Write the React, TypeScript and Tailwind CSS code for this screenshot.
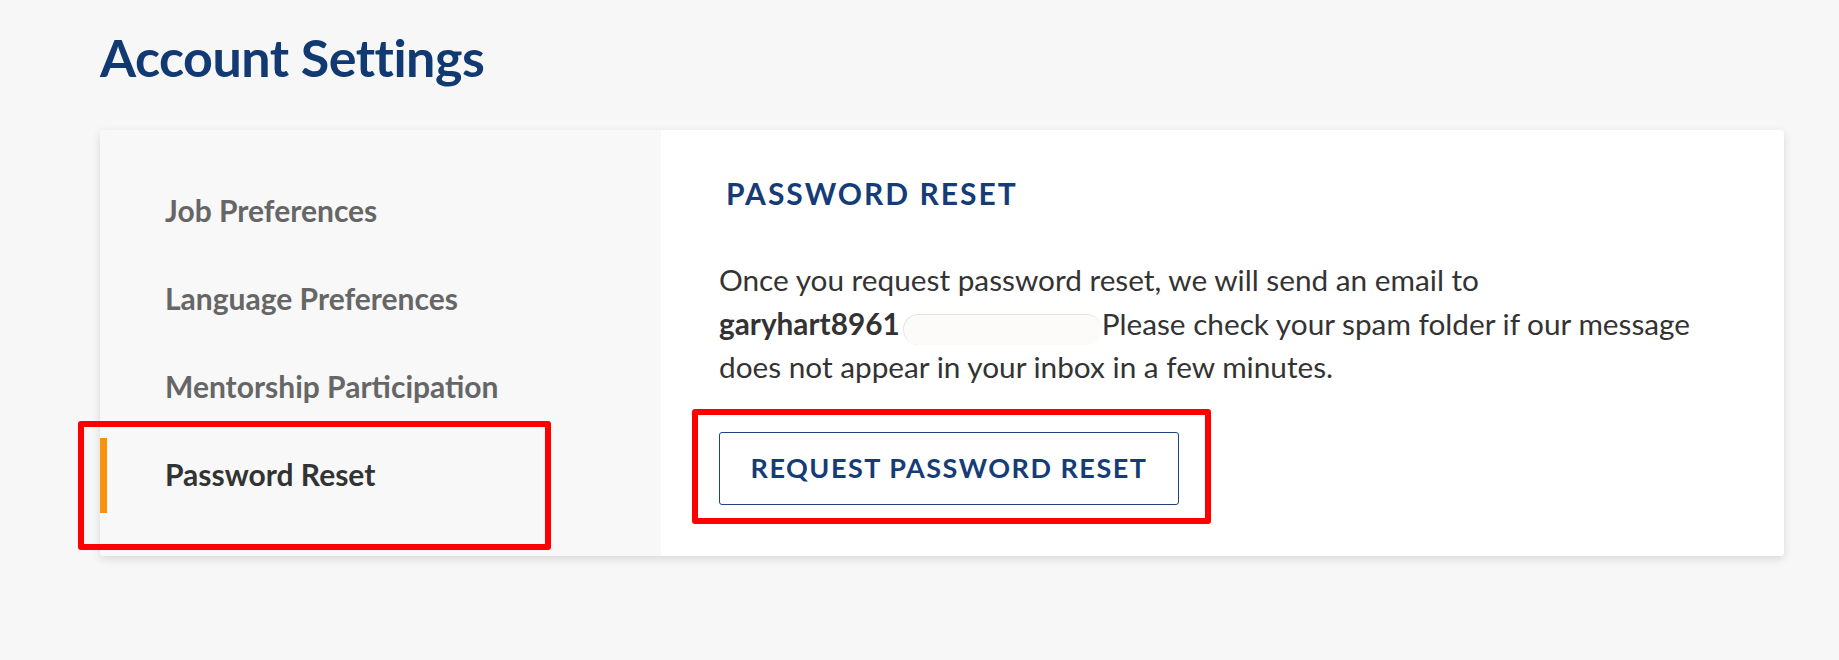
import React from "react";

const navItems = [
  "Job Preferences",
  "Language Preferences",
  "Mentorship Participation",
  "Password Reset",
];

export default function App() {
  const active = "Password Reset";
  return (
    <div
      className="relative min-h-[660px] w-full bg-[#f7f7f7] pl-[100px] pr-[55px] pt-[26px]"
      style={{ fontFamily: "Lato, 'Open Sans', sans-serif" }}
    >
      <h1 className="text-[52px] font-bold leading-[1.2] tracking-[-0.5px] text-[#113a73]">Account Settings</h1>

      <div className="mt-[42px] flex w-[1684px] overflow-hidden rounded-[4px] bg-white shadow-[0_3px_10px_rgba(0,0,0,0.13)]">
        <nav className="flex w-[561px] shrink-0 flex-col gap-[13px] bg-[#f8f8f8] pb-[43px] pt-[44px]">
          {navItems.map((item) => {
            const isActive = item === active;
            return (
              <div key={item} className="relative flex h-[75px] items-center pb-[4px] pl-[65px]">
                {isActive && <span className="absolute left-0 top-0 h-full w-[7px] bg-[#f7920d]" />}
                <span
                  className={
                    "text-[30px] font-bold leading-[1.2] " +
                    (isActive ? "text-[#333333]" : "text-[#666666]")
                  }
                >
                  {item}
                </span>
              </div>
            );
          })}
        </nav>

        <section className="flex-1 bg-white pl-[58px] pr-[50px] pt-[45px]">
          <h2 className="ml-[7px] text-[30px] font-bold uppercase leading-[1.2] tracking-[2px] text-[#163c77]">
            Password Reset
          </h2>
          <p className="mt-[47px] text-[29.75px] leading-[43.5px] text-[#333333]">
            Once you request password reset, we will send an email to <br />
            <span className="font-bold">garyhart8961</span>
            <span className="ml-[3px] inline-block h-[31px] w-[199px] translate-y-[10px] rounded-full border-l border-t border-[#e4e4e4] bg-[#fcfbf9] align-baseline" />
            Please check your spam folder if our message does not appear in your inbox in a few minutes.
          </p>
          <button className="mt-[43px] h-[73px] w-[460px] rounded-[3px] border border-[#1d4380] bg-white text-[27px] font-bold uppercase tracking-[1.5px] text-[#163c77]">
            Request Password Reset
          </button>
        </section>
      </div>

      <div className="pointer-events-none absolute left-[78px] top-[421px] h-[129px] w-[473px] rounded-[3px] border-[6px] border-[#ff0000]" />
      <div className="pointer-events-none absolute left-[692px] top-[409px] h-[115px] w-[519px] rounded-[3px] border-[6px] border-[#ff0000]" />
    </div>
  );
}
